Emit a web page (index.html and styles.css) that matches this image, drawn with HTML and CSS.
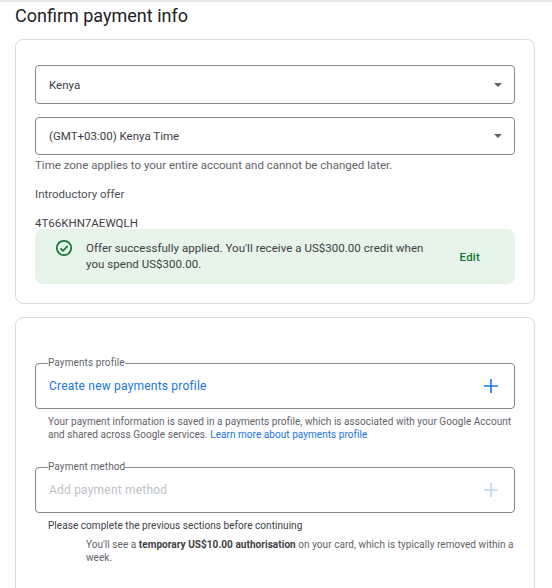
FILE: index.html
```html
<!DOCTYPE html>
<html lang="en">
<head>
<meta charset="utf-8">
<title>Confirm payment info</title>
<link rel="stylesheet" href="styles.css">
</head>
<body>
<div class="topline"></div>
<main class="page">
  <h1 class="title">Confirm payment info</h1>
  <section class="card card-offer">
    <div class="select select-country"><span>Kenya</span><i class="caret"></i></div>
    <div class="select select-zone"><span>(GMT+03:00) Kenya Time</span><i class="caret"></i></div>
    <p class="hint">Time zone applies to your entire account and cannot be changed later.</p>
    <p class="offer-label">Introductory offer</p>
    <p class="offer-code">4T66KHN7AEWQLH</p>
    <div class="banner">
      <svg class="check" viewBox="0 0 18 18" width="18" height="18" aria-hidden="true">
        <circle cx="9" cy="9" r="7.2" fill="none" stroke="#137333" stroke-width="1.7"/>
        <path d="M5.5 9.3l2.5 2.5 4.7-4.9" fill="none" stroke="#137333" stroke-width="1.7"/>
      </svg>
      <p class="banner-text">Offer successfully applied. You'll receive a US$300.00 credit when you spend US$300.00.</p>
      <span class="edit">Edit</span>
    </div>
  </section>
  <section class="card card-pay">
    <fieldset class="field field-profile">
      <legend>Payments profile</legend>
      <span class="field-link">Create new payments profile</span>
      <svg class="plus" viewBox="0 0 14 14" width="14" height="14" aria-hidden="true"><path d="M7 0v14M0 7h14" stroke="#1a73e8" stroke-width="1.6"/></svg>
    </fieldset>
    <p class="small note">Your payment information is saved in a payments profile, which is associated with your Google Account and shared across Google services. <a class="learn">Learn more about payments profile</a></p>
    <fieldset class="field field-method">
      <legend>Payment method</legend>
      <span class="field-muted">Add payment method</span>
      <svg class="plus plus-off" viewBox="0 0 14 14" width="14" height="14" aria-hidden="true"><path d="M7 0v14M0 7h14" stroke="#1a73e8" stroke-width="1.6"/></svg>
    </fieldset>
    <p class="small complete">Please complete the previous sections before continuing</p>
    <p class="small auth">You'll see a <b>temporary US$10.00 authorisation</b> on your card, which is typically removed within a week.</p>
  </section>
</main>
</body>
</html>
```
FILE: styles.css
```css
* { box-sizing: border-box; }
html, body { margin: 0; padding: 0; height: 588px; overflow: hidden; background: #fff; }
body { font-family: Roboto, "Liberation Sans", sans-serif; color: #3c4043; }
p { margin: 0; }
.topline { height: 2px; background: #e8e8e8; }
.page { padding: 0 17px 0 15px; }
.title { margin: 0; padding-top: 1px; height: 37px; font-size: 18px; line-height: 26px; font-weight: 400; color: #202124; }
.card { border: 1px solid #dadce0; border-radius: 8px; padding: 0 19px; background: #fff; }
.card-offer { height: 265px; padding-top: 25px; }
.card-pay { margin-top: 13px; height: 300px; padding-top: 36px; }
.select { display: flex; align-items: center; justify-content: space-between; border: 1px solid #80868b; border-radius: 4px; padding: 0 12px 0 13px; font-size: 11.5px; color: #3c4043; }
.select-country { height: 39px; }
.select-zone { height: 38px; margin-top: 13px; }
.caret { width: 0; height: 0; border-left: 4px solid transparent; border-right: 4px solid transparent; border-top: 4px solid #5f6368; }
.hint, .offer-label, .offer-code { font-size: 11.5px; line-height: 16px; color: #5f6368; }
.hint { margin-top: 2px; }
.offer-label { margin-top: 13px; color: #4d5156; }
.offer-code { margin-top: 13px; color: #3c4043; }
.banner { display: flex; align-items: flex-start; height: 55px; margin-top: -2px; padding: 11px 35px 0 20px; background: #e6f4ea; border-radius: 8px; }
.check { flex: none; margin-top: -1px; }
.banner-text { width: 345px; margin-left: 13px; font-size: 11.5px; line-height: 16px; letter-spacing: 0.04px; }
.edit { align-self: center; margin: -11px 0 0 auto; font-size: 11.5px; font-weight: 500; letter-spacing: 0.2px; color: #137333; }
.field { display: flex; align-items: center; justify-content: space-between; margin: 0; border: 1px solid #80868b; border-radius: 4px; padding: 0 16px 5px 13px; min-width: 0; }
.field legend { margin-left: -1px; padding: 0; font-size: 10px; line-height: 10px; letter-spacing: 0.1px; color: #5f6368; }
.field-profile { height: 51px; margin-top: 4px; }
.field-method { height: 51px; margin-top: 21px; }
.field-link { font-size: 12px; letter-spacing: 0.2px; color: #1a73e8; }
.field-muted { font-size: 12px; letter-spacing: 0.2px; color: #bdc1c6; }
.plus-off { opacity: 0.3; }
.small { font-size: 10px; line-height: 13px; letter-spacing: 0.05px; color: #5f6368; }
.note { margin-top: 6px; padding-left: 13px; }
.learn { color: #1a73e8; }
.complete { margin-top: 6px; padding-left: 13px; color: #3c4043; }
.auth { margin-top: 6px; padding-left: 51px; }
.auth b { font-weight: 700; color: #3c4043; }
```
